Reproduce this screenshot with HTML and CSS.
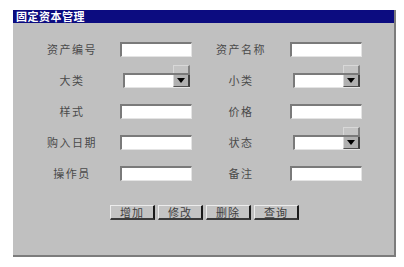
FILE: index.html
```html
<!DOCTYPE html>
<html lang="zh-CN">
<head>
<meta charset="utf-8">
<title>固定资本管理</title>
<link rel="stylesheet" href="styles.css">
</head>
<body>
<div class="window">
  <div class="titlebar">固定资本管理</div>
  <div class="content">
    <div class="form">
      <div class="label l1">资产编号</div>
      <div class="field"><div class="input"></div></div>
      <div class="label">资产名称</div>
      <div class="field"><div class="input"></div></div>

      <div class="label l1">大类</div>
      <div class="field"><div class="combo"><div class="combo-text"></div><div class="combo-btn"><span class="tri"></span></div><div class="combo-ghost"></div></div></div>
      <div class="label">小类</div>
      <div class="field"><div class="combo"><div class="combo-text"></div><div class="combo-btn"><span class="tri"></span></div><div class="combo-ghost"></div></div></div>

      <div class="label l1">样式</div>
      <div class="field"><div class="input"></div></div>
      <div class="label">价格</div>
      <div class="field"><div class="input"></div></div>

      <div class="label l1">购入日期</div>
      <div class="field"><div class="input"></div></div>
      <div class="label">状态</div>
      <div class="field"><div class="combo"><div class="combo-text"></div><div class="combo-btn"><span class="tri"></span></div><div class="combo-ghost"></div></div></div>

      <div class="label l1">操作员</div>
      <div class="field"><div class="input"></div></div>
      <div class="label">备注</div>
      <div class="field"><div class="input"></div></div>
    </div>
    <div class="buttons">
      <div class="btn">增加</div>
      <div class="btn">修改</div>
      <div class="btn">删除</div>
      <div class="btn">查询</div>
    </div>
  </div>
</div>
</body>
</html>
```
FILE: styles.css
```css
html, body {
  margin: 0;
  padding: 0;
  background: #ffffff;
}
body {
  font-family: "Noto Sans CJK SC", "Noto Sans", sans-serif;
  padding: 10px 0 0 13px;
}
.window {
  box-sizing: border-box;
  width: 383px;
  height: 247px;
  background: #c0c0c0;
  border-right: 2px solid #7c7c7c;
  border-bottom: 2px solid #7c7c7c;
  display: flex;
  flex-direction: column;
}
.titlebar {
  height: 13px;
  background: #0c0c80;
  color: #ffffff;
  font-size: 11px;
  font-weight: bold;
  line-height: 13px;
  letter-spacing: 0.5px;
  padding-left: 3px;
}
.content {
  flex: 1;
  display: flex;
  flex-direction: column;
}
.form {
  display: grid;
  grid-template-columns: 88px 72px 98px 72px;
  grid-auto-rows: 31px;
  align-items: center;
  padding: 11px 0 0 19px;
}
.label {
  font-size: 11px;
  letter-spacing: 1.5px;
  color: #4a4a4a;
  text-align: center;
  line-height: 15px;
}
.l1 {
  padding-right: 8px;
}
.field {
  display: flex;
  align-items: center;
}
.input {
  box-sizing: border-box;
  width: 72px;
  height: 15px;
  background: #ffffff;
  border-top: 2px solid #7a7a7a;
  border-left: 2px solid #7a7a7a;
  border-right: 1px solid #e4e4e4;
  border-bottom: 1px solid #e4e4e4;
}
.combo {
  position: relative;
  box-sizing: border-box;
  margin-left: 3px;
  width: 67px;
  height: 15px;
  display: flex;
  background: #ffffff;
  border-top: 2px solid #7a7a7a;
  border-left: 2px solid #7a7a7a;
  border-bottom: 1px solid #e4e4e4;
}
.combo-text {
  flex: 1;
}
.combo-btn {
  box-sizing: border-box;
  width: 17px;
  background: #b0b0b0;
  border-left: 1px solid #d8d8d8;
  border-right: 2px solid #404040;
  border-bottom: 1px solid #505050;
  display: flex;
  align-items: center;
  justify-content: center;
}
.tri {
  width: 0;
  height: 0;
  border-left: 4px solid transparent;
  border-right: 4px solid transparent;
  border-top: 5px solid #000000;
}
.combo-ghost {
  position: absolute;
  right: 0;
  top: -10px;
  box-sizing: border-box;
  width: 17px;
  height: 8px;
  background: #c4c4c4;
  border-top: 1px solid #d8d8d8;
  border-left: 1px solid #d8d8d8;
  border-right: 2px solid #808080;
}
.buttons {
  display: flex;
  justify-content: center;
  gap: 3px;
  margin-top: 16px;
  padding-left: 2px;
}
.btn {
  box-sizing: border-box;
  width: 45px;
  height: 15px;
  background: #c4c4c4;
  border-top: 1px solid #ececec;
  border-left: 1px solid #ececec;
  border-right: 2px solid #1a1a1a;
  border-bottom: 2px solid #3a3a3a;
  font-size: 11px;
  letter-spacing: 1px;
  color: #404040;
  text-align: center;
  line-height: 12px;
}
```
